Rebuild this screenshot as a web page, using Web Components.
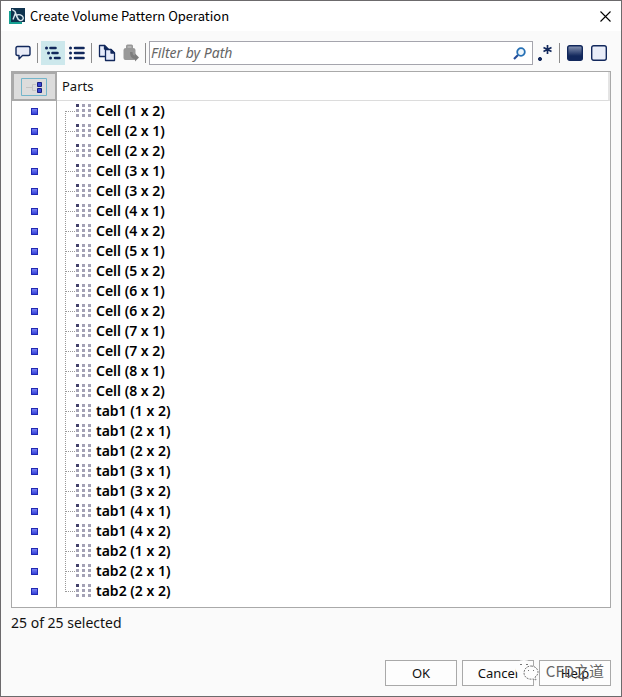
<!DOCTYPE html>
<html lang="en">
<head>
<meta charset="utf-8">
<meta name="viewport" content="width=device-width, initial-scale=1">
<title>Create Volume Pattern Operation</title>
<style>
  html,
  body {
    height: 100%;
    margin: 0;
  }

  body {
    --navy: #12285c;
    --line: #a9a9a9;
    --surface: #fafafa;
    font: 13px/20px "Noto Sans", "Open Sans", sans-serif;
    color: #111;
  }
</style>
</head>
<body>
<vp-dialog>
  <span slot="title">Create Volume Pattern Operation</span>
  <vp-toolbar slot="toolbar"></vp-toolbar>
  <vp-parts slot="content"></vp-parts>
  <span slot="status">25 of 25 selected</span>
  <vp-button slot="actions">OK</vp-button>
  <vp-button slot="actions">Cancel</vp-button>
  <vp-button slot="actions">Help</vp-button>
  <vp-watermark slot="mark">CFD之道</vp-watermark>
</vp-dialog>

<script>
class Component extends HTMLElement {
  constructor() {
    super();
    this._root = this.attachShadow({ mode: "open" });
    this._root.innerHTML = this.constructor.markup;
  }
}

class Dialog extends Component {
  static markup = `
    <style>
      :host {
        display: flex;
        flex-direction: column;
        box-sizing: border-box;
        min-height: 100%;
        border: 1px solid #6c6a6c;
        background: var(--surface);
      }

      header {
        display: flex;
        align-items: center;
        gap: 5px;
        height: 30px;
        padding: 0 8px;
        background: #fff;
        color: #000;
      }

      h1 {
        flex: 1;
        margin: 0;
        font: 400 13px/20px "Noto Sans CJK SC", sans-serif;
      }

      .close {
        display: flex;
        padding: 2px;
        border: 0;
        background: none;
      }

      main {
        flex: 1;
        display: flex;
        flex-direction: column;
        padding: 10px 10px 0;
      }

      .status {
        margin: 0;
        padding: 5px 0;
        font-size: 14px;
      }

      footer {
        position: relative;
        display: flex;
        justify-content: flex-end;
        gap: 5px;
        padding: 0 10px 10px;
      }
    </style>
    <header>
      <svg width="16" height="16" viewBox="0 0 16 16" aria-hidden="true">
        <path fill="#16a092" d="M0 3h3v10h10v3H0z"/>
        <path fill="#10344f" d="M2 0h14v14H2z"/>
        <path fill="none" stroke="#dbe8ee" stroke-width="1.400" d="M3 1.500l3 2 3 8M6.500 5L4 11.500M8 7c2-1 5 0 6 2s-1 4-3 3.500S8 9 7 7"/>
      </svg>
      <h1><slot name="title"></slot></h1>
      <button class="close" aria-label="Close">
        <svg width="11" height="11" viewBox="0 0 11 11"><path fill="none" stroke="#000" stroke-width="1.100" d="M.5.5l10 10M10.500.5l-10 10"/></svg>
      </button>
    </header>
    <main>
      <slot name="toolbar"></slot>
      <slot name="content"></slot>
      <p class="status"><slot name="status"></slot></p>
    </main>
    <footer>
      <slot name="actions"></slot>
      <slot name="mark"></slot>
    </footer>
  `;

  connectedCallback() {
    this._root.querySelector(".close").addEventListener("click", () => this.remove());
  }
}

class Toolbar extends Component {
  static markup = `
    <style>
      :host {
        display: flex;
        align-items: center;
        margin-bottom: 6px;
      }

      button {
        display: flex;
        align-items: center;
        justify-content: center;
        width: 24px;
        height: 24px;
        padding: 0;
        border: 0;
        background: none;
      }

      button[aria-pressed="true"] {
        background: #cde8ec;
      }

      hr {
        width: 1px;
        height: 20px;
        margin: 0 3px 0 2px;
        border: 0;
        background: #8c8c8c;
      }

      .search {
        flex: 1;
        display: flex;
        align-items: center;
        box-sizing: border-box;
        min-width: 0;
        height: 24px;
        padding: 0 6px 0 1px;
        border: 1px solid #a5a5ad;
        background: #fff;
      }

      input {
        flex: 1;
        min-width: 0;
        padding: 0;
        border: 0;
        outline: none;
        background: none;
        font: inherit;
        font-size: 14px;
      }

      input::placeholder {
        color: #666;
        font-style: italic;
        opacity: 1;
      }
    </style>
    <button aria-label="Comment">
      <svg width="16" height="16" viewBox="0 0 16 16"><path fill="#e9ecf8" stroke="#12285c" stroke-width="1.400" stroke-linejoin="round" d="M2.500 1.500h11q1.500 0 1.500 1.500v6q0 1.500-1.500 1.500H7.500L4 14v-3.500H2.500Q1 10.500 1 9V3q0-1.500 1.500-1.500z"/></svg>
    </button>
    <hr>
    <button class="view" aria-label="Tree view" aria-pressed="true">
      <svg width="16" height="16" viewBox="0 0 16 16" fill="none" stroke="#12285c" stroke-width="3" stroke-linecap="round">
        <path stroke-width="2.600" d="M5.500 3h5M7.500 8h5M10 13h4.500"/>
        <path d="M1.500 3h.01M3.500 8h.01M5.500 13h.01"/>
      </svg>
    </button>
    <button class="view" aria-label="List view" aria-pressed="false">
      <svg width="16" height="16" viewBox="0 0 16 16" fill="none" stroke="#12285c" stroke-width="3" stroke-linecap="round">
        <path stroke-width="2.600" d="M6 3h8.500M6 8h8.500M6 13h8.500"/>
        <path d="M1.500 3h.01M1.500 8h.01M1.500 13h.01"/>
      </svg>
    </button>
    <hr>
    <button aria-label="Copy">
      <svg width="18" height="18" viewBox="0 0 18 18" fill="#e6ebfa" stroke="#12285c" stroke-width="1.300" stroke-linejoin="round">
        <path d="M1.500 1.500h5l3.500 3.500v7.500H1.500z"/>
        <path fill="#12285c" d="M6.500 1.500V5H10z"/>
        <path d="M7.500 5.500H13l3.500 3.500v7.500h-9z"/>
        <path fill="#12285c" d="M13 5.500V9h3.500z"/>
      </svg>
    </button>
    <button aria-label="Paste">
      <svg width="16" height="18" viewBox="0 0 16 18">
        <path fill="#989898" d="M3 4V2q0-1.500 1.500-1.500h4Q10 .5 10 2v2q2.500 0 2.500 2v10H2.500Q.5 16 .5 14V6q0-2 2.500-2z"/>
        <path fill="#b4b4b4" d="M4.500 2h4v2h-4z"/>
        <path fill="#7d7d7d" d="M7 8h2.500q0 3.500 2.500 3.500V9.500l4 4-4 4v-2.500Q7 15 7 8z"/>
      </svg>
    </button>
    <hr>
    <label class="search">
      <input type="text" placeholder="Filter by Path" aria-label="Filter by Path">
      <svg width="13" height="13" viewBox="0 0 13 13" fill="none" aria-hidden="true">
        <path stroke="#244b98" stroke-width="2.200" d="M1 12l4-4"/>
        <circle cx="8" cy="5" r="3.800" stroke="#2670b5" stroke-width="1.800" fill="#eef6fc"/>
      </svg>
    </label>
    <button aria-label="Regular expression">
      <svg width="16" height="18" viewBox="0 0 16 18" stroke="#12285c" fill="#12285c">
        <circle cx="3" cy="15" r="1.600"/>
        <path stroke-width="1.700" d="M10.500 1v9M6.500 3.500l8 4M14.500 3.500l-8 4"/>
      </svg>
    </button>
    <hr>
    <button aria-label="Select all">
      <svg width="16" height="16" viewBox="0 0 16 16">
        <defs><linearGradient id="fade" x2="0" y2="1"><stop stop-color="#8b98b6"/><stop offset=".7" stop-color="#12285c"/></linearGradient></defs>
        <rect x=".7" y=".7" width="14.600" height="14.600" rx="2" fill="url(#fade)" stroke="#12285c" stroke-width="1.400"/>
      </svg>
    </button>
    <button aria-label="Select none">
      <svg width="16" height="16" viewBox="0 0 16 16"><rect x=".7" y=".7" width="14.600" height="14.600" rx="2" fill="#e9edf8" stroke="#12285c" stroke-width="1.400"/></svg>
    </button>
  `;

  connectedCallback() {
    const views = this._root.querySelectorAll(".view");
    views.forEach((view) => {
      view.addEventListener("click", () => {
        views.forEach((v) => v.setAttribute("aria-pressed", String(v === view)));
      });
    });
  }
}

const grid = (count, cell) => [...Array(count)].map((_, i) => cell(i)).join("");

const patternIcon = `
  <svg width="16" height="15" viewBox="0 0 16 15" fill="#a3a1b5" aria-hidden="true">
    ${grid(9, (i) => `<rect x="${(i % 3) * 6}" y="${Math.floor(i / 3) * 5}" width="3" height="3"${i ? "" : ' fill="#42406a"'}/>`)}
  </svg>`;

class Parts extends Component {
  static markup = `
    <style>
      :host {
        display: block;
        padding-bottom: 6px;
        border: 1px solid var(--line);
        background: linear-gradient(to right, #fff 44px, var(--line) 44px, var(--line) 45px, #fff 45px);
      }

      table {
        width: 100%;
        border-collapse: separate;
        border-spacing: 0;
        table-layout: fixed;
      }

      th,
      td {
        height: 20px;
        padding: 0;
        text-align: left;
      }

      th {
        height: 28px;
        padding-left: 5px;
        border-bottom: 1px solid #dcdcdc;
        border-right: 2px solid #e4e4e4;
        font-weight: 400;
      }

      th.toggle {
        width: 45px;
        padding: 0;
        border: 0;
      }

      .toggle button {
        display: flex;
        align-items: center;
        justify-content: center;
        width: 45px;
        height: 29px;
        padding: 0 2px 0 0;
        border: 2px solid var(--line);
        background: #dcdcdc;
      }

      td.mark {
        padding-right: 1px;
        text-align: center;
        line-height: 0;
      }

      input {
        appearance: none;
        width: 7px;
        height: 7px;
        margin: 0;
        border: 1px solid #2229b4;
        background: linear-gradient(#7a84f2, #3340d8);
        vertical-align: middle;
      }

      input:not(:checked) {
        background: #fff;
      }

      .part {
        display: flex;
        align-items: center;
        height: 20px;
        font-size: 14px;
        font-weight: 600;
        color: #000;
      }

      /* dotted tree lines */
      .branch {
        align-self: flex-start;
        box-sizing: border-box;
        width: 10px;
        height: 11px;
        margin-left: 8px;
        border-bottom: 1px dotted #999;
      }

      .part svg {
        align-self: flex-start;
        margin: 3px 4px 0 1px;
      }

      .part {
        background: repeating-linear-gradient(#999 0 1px, transparent 1px 2px) 8px 0 / 1px 100% no-repeat;
      }

      tr:first-child .part {
        background-position: 8px 10px;
      }

      tr:last-child .part {
        background-size: 1px 11px;
      }
    </style>
    <table>
      <thead>
        <tr>
          <th class="toggle">
            <button aria-label="Toggle selection">
              <svg width="26" height="18" viewBox="0 0 26 18">
                <path fill="none" stroke="#73b5ca" d="M.5.5h25v17H.5z"/>
                <path fill="none" stroke="#c4c4c4" d="M5 9.500h6M15 6.500h-3.500v6H15"/>
                <path fill="#3745d2" stroke="#1a1f80" d="M16.500 4.500h4v4h-4zM16.500 10.500h4v4h-4z"/>
              </svg>
            </button>
          </th>
          <th>Parts</th>
        </tr>
      </thead>
      <tbody></tbody>
    </table>
  `;

  connectedCallback() {
    const names = [
      ...this._names("Cell", 8),
      ...this._names("tab1", 4),
      ...this._names("tab2", 2),
    ];
    this._root.querySelector("tbody").innerHTML = names
      .map((name, i) => `
        <tr>
          <td class="mark"><input type="checkbox" id="part${i}" aria-label="${name}" checked></td>
          <td><label class="part" for="part${i}"><span class="branch"></span>${patternIcon}${name}</label></td>
        </tr>`)
      .join("");
  }

  // the (1 x 1) part is the source of the pattern, so it is left out
  _names(base, rows) {
    const names = [];
    for (let row = 1; row <= rows; row++) {
      for (let col = 1; col <= 2; col++) {
        if (row * col > 1) names.push(`${base} (${row} x ${col})`);
      }
    }
    return names;
  }
}

class Button extends Component {
  static markup = `
    <style>
      :host {
        display: block;
        width: 72px;
      }

      button {
        width: 100%;
        height: 26px;
        padding: 0;
        border: 1px solid var(--line);
        background: #fdfdfd;
        font: inherit;
        color: inherit;
      }
    </style>
    <button><slot></slot></button>
  `;
}

class Watermark extends Component {
  static markup = `
    <style>
      :host {
        position: absolute;
        right: 17px;
        top: 0;
        display: flex;
        align-items: center;
        gap: 7px;
        font: 15px/22px "Noto Sans CJK SC", sans-serif;
        color: #666;
        pointer-events: none;
      }
    </style>
    <svg width="24" height="22" viewBox="0 0 24 22" fill="#fdfdfd" aria-hidden="true">
      <path d="M9 0c5 0 9 3 9 7s-4 7-9 7H6l-3 2v-3C1 12 0 10 0 8c0-5 4-8 9-8z"/>
      <path stroke="#777" stroke-dasharray="2 1" d="M16 6c4 0 7 3 7 6 0 2-1 4-3 5l1 3-3-1c-5 1-9-2-9-6 0-4 3-7 7-7z"/>
      <path fill="#777" d="M5 4h2v1H5zM11 4h2v1h-2zM13 10h1v1h-1zM18 10h1v1h-1z"/>
    </svg>
    <slot></slot>
  `;
}

customElements.define("vp-dialog", Dialog);
customElements.define("vp-toolbar", Toolbar);
customElements.define("vp-parts", Parts);
customElements.define("vp-button", Button);
customElements.define("vp-watermark", Watermark);
</script>
</body>
</html>
